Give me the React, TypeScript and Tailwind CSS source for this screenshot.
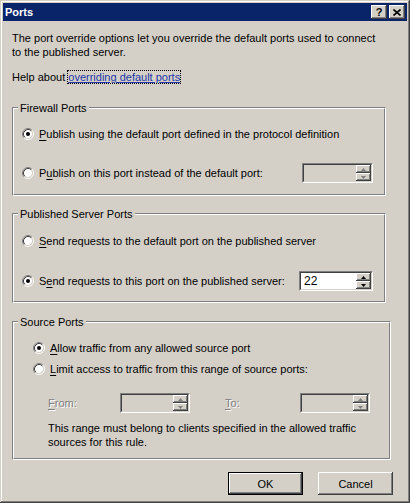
import React from "react";

const Radio = ({ checked }: { checked?: boolean }) => (
  <svg width="12" height="12" viewBox="0 0 12 12" className="shrink-0">
    <circle cx="6" cy="6" r="4.2" fill="#ffffff" />
    <path d="M2.11 9.89 A5.5 5.5 0 0 1 9.89 2.11" fill="none" stroke="#808080" strokeWidth="1" />
    <path d="M9.89 2.11 A5.5 5.5 0 0 1 2.11 9.89" fill="none" stroke="#ffffff" strokeWidth="1" />
    <path d="M2.82 9.18 A4.5 4.5 0 0 1 9.18 2.82" fill="none" stroke="#404040" strokeWidth="1" />
    <path d="M9.18 2.82 A4.5 4.5 0 0 1 2.82 9.18" fill="none" stroke="#d4d0c8" strokeWidth="1" />
    {checked && <circle cx="6" cy="6" r="2" fill="#000000" />}
  </svg>
);

const SpinBtn = ({ up, disabled }: { up?: boolean; disabled?: boolean }) => (
  <div className="h-[8px] w-[15px] bg-[#d4d0c8] flex items-center justify-center shadow-[inset_-1px_-1px_#404040,inset_1px_1px_#ffffff,inset_-2px_-2px_#808080]">
    <svg width="5" height="3" viewBox="0 0 5 3">
      {up ? (
        <path d="M2.5 0 L5 3 L0 3 Z" fill={disabled ? "#808080" : "#000000"} />
      ) : (
        <path d="M0 0 L5 0 L2.5 3 Z" fill={disabled ? "#808080" : "#000000"} />
      )}
    </svg>
  </div>
);

const Spin = ({
  className,
  value,
  disabled,
}: {
  className: string;
  value?: string;
  disabled?: boolean;
}) => (
  <div
    className={
      "flex h-[20px] border border-t-[#808080] border-l-[#808080] border-b-[#ffffff] border-r-[#ffffff] " +
      className
    }
  >
    <div
      className={
        "flex flex-1 border border-t-[#404040] border-l-[#404040] border-b-[#d4d0c8] border-r-[#d4d0c8] " +
        (disabled ? "bg-[#d4d0c8]" : "bg-white")
      }
    >
      <div className="flex-1 pl-[3px] leading-[16px] text-[12px]">{value}</div>
      <div className="flex flex-col">
        <SpinBtn up disabled={disabled} />
        <SpinBtn disabled={disabled} />
      </div>
    </div>
  </div>
);

const Group = ({
  label,
  className,
  children,
}: {
  label: string;
  className: string;
  children: React.ReactNode;
}) => (
  <div
    className={
      "relative border border-t-[#808080] border-l-[#808080] border-b-[#ffffff] border-r-[#ffffff] " +
      className
    }
  >
    <div className="h-full border border-t-[#ffffff] border-l-[#ffffff] border-b-[#808080] border-r-[#808080] flex flex-col">
      {children}
    </div>
    <span className="absolute left-[5px] top-[-7px] px-[2px] bg-[#d4d0c8] leading-[14px]">
      {label}
    </span>
  </div>
);

const U = ({ children }: { children: React.ReactNode }) => (
  <span className="underline underline-offset-[2px]">{children}</span>
);

export default function App() {
  return (
    <div className="w-[410px] h-[503px] bg-[#d4d0c8] p-[3px] flex flex-col text-[11px] leading-[14px] text-black font-['Liberation_Sans',Arial,sans-serif] shadow-[inset_-1px_-1px_#404040,inset_1px_1px_#d4d0c8,inset_-2px_-2px_#808080,inset_2px_2px_#ffffff]">
      {/* title bar */}
      <div className="h-[18px] bg-[#0a246a] flex items-center justify-between pl-[2px] pr-[2px]">
        <span className="text-white font-bold text-[11px] leading-[14px]">Ports</span>
        <div className="flex gap-[2px]">
          <div className="w-[16px] h-[14px] bg-[#d4d0c8] flex items-center justify-center font-bold text-[11px] leading-none shadow-[inset_-1px_-1px_#404040,inset_1px_1px_#ffffff,inset_-2px_-2px_#808080]">
            ?
          </div>
          <div className="w-[16px] h-[14px] bg-[#d4d0c8] flex items-center justify-center shadow-[inset_-1px_-1px_#404040,inset_1px_1px_#ffffff,inset_-2px_-2px_#808080]">
            <svg width="8" height="7" viewBox="0 0 8 7">
              <path d="M0.5 0.5 L7.5 6.5 M7.5 0.5 L0.5 6.5" stroke="#000" strokeWidth="1.6" />
            </svg>
          </div>
        </div>
      </div>

      {/* body */}
      <div className="flex flex-col pl-[9px]">
        <p className="mt-[10px] w-[372px]">
          The port override options let you override the default ports used to connect to the
          published server.
        </p>
        <p className="mt-[11px]">
          Help about{" "}
          <span className="text-[#2236a8] underline outline outline-1 outline-dotted outline-black">
            overriding default ports
          </span>
        </p>

        <Group label="Firewall Ports" className="mt-[23px] w-[374px] h-[89px]">
          <div className="mt-[15px] h-[20px] flex items-center pl-[8px]">
            <Radio checked />
            <span className="ml-[5px]">
              <U>P</U>ublish using the default port defined in the protocol definition
            </span>
          </div>
          <div className="mt-[19px] h-[20px] flex items-center pl-[8px] pr-[11px]">
            <Radio />
            <span className="ml-[5px]">
              P<U>u</U>blish on this port instead of the default port:
            </span>
            <Spin className="ml-auto w-[71px]" disabled />
          </div>
        </Group>

        <Group label="Published Server Ports" className="mt-[17px] w-[374px] h-[90px]">
          <div className="mt-[16px] h-[20px] flex items-center pl-[8px]">
            <Radio />
            <span className="ml-[5px]">
              <U>S</U>end requests to the default port on the published server
            </span>
          </div>
          <div className="mt-[20px] h-[20px] flex items-center pl-[8px] pr-[11px]">
            <Radio checked />
            <span className="ml-[5px]">
              S<U>e</U>nd requests to this port on the published server:
            </span>
            <Spin className="ml-auto w-[74px]" value="22" />
          </div>
        </Group>

        <Group label="Source Ports" className="mt-[18px] w-[379px] h-[139px]">
          <div className="mt-[17px] h-[16px] flex items-center pl-[19px]">
            <Radio checked />
            <span className="ml-[5px]">
              <U>A</U>llow traffic from any allowed source port
            </span>
          </div>
          <div className="mt-[5px] h-[16px] flex items-center pl-[19px]">
            <Radio />
            <span className="ml-[5px]">
              <U>L</U>imit access to traffic from this range of source ports:
            </span>
          </div>
          <div className="mt-[16px] h-[20px] flex items-center pl-[34px]">
            <span className="w-[72px] text-[#808080] [text-shadow:1px_1px_#ffffff]">
              <U>F</U>rom:
            </span>
            <Spin className="w-[70px]" disabled />
            <span className="ml-[35px] w-[75px] text-[#808080] [text-shadow:1px_1px_#ffffff]">
              <U>T</U>o:
            </span>
            <Spin className="w-[70px]" disabled />
          </div>
          <p className="mt-[8px] pl-[34px] w-[355px]">
            This range must belong to clients specified in the allowed traffic sources for this
            rule.
          </p>
        </Group>

        <div className="mt-[12px] flex justify-end pr-[14px] gap-[15px]">
          <div className="w-[75px] h-[23px] border border-black">
            <div className="w-full h-full flex items-center justify-center shadow-[inset_-1px_-1px_#404040,inset_1px_1px_#ffffff,inset_-2px_-2px_#808080]">
              OK
            </div>
          </div>
          <div className="w-[75px] h-[23px] flex items-center justify-center shadow-[inset_-1px_-1px_#404040,inset_1px_1px_#ffffff,inset_-2px_-2px_#808080]">
            Cancel
          </div>
        </div>
      </div>
    </div>
  );
}
